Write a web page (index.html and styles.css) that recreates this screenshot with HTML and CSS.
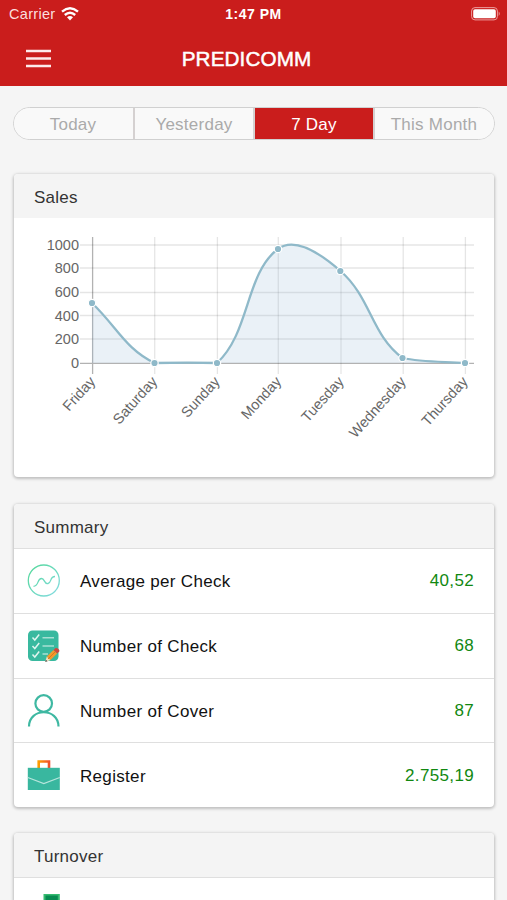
FILE: index.html
```html
<!DOCTYPE html>
<html lang="en">
<head>
<meta charset="utf-8">
<title>Predicomm</title>
<link rel="stylesheet" href="styles.css">
</head>
<body>
<header class="topbar">
  <div class="status">
    <div class="carrier"><span>Carrier</span>
      <svg width="18" height="14" viewBox="0 0 18 14" fill="none" stroke="#fff" stroke-width="2.4"><path d="M1 4.700Q9-2 17 4.700M3.800 8Q9 3.500 14.200 8"/><path d="M6 10.300Q9 7.600 12 10.300L9 13.500Z" fill="#fff" stroke="none"/></svg>
    </div>
    <span class="clock">1:47 PM</span>
    <svg class="battery" width="30" height="14" viewBox="0 0 30 14"><rect x=".6" y=".6" width="25.8" height="12.3" rx="3.4" fill="none" stroke="#ec9c9c" stroke-width="1"/><rect x="2.2" y="2.2" width="22.6" height="9.1" rx="1.8" fill="#fff"/><path d="M27.7 4.6Q29.8 6.8 27.7 9Z" fill="#ec9c9c"/></svg>
  </div>
  <div class="nav">
    <svg class="burger" width="25" height="19" viewBox="0 0 25 19" stroke="#fdeaea" stroke-width="2.4"><path d="M0 2H25M0 9.5H25M0 17H25"/></svg>
    <h1>PREDICOMM</h1>
    <span></span>
  </div>
</header>
<main>
  <div class="tabs">
    <div class="tab">Today</div>
    <div class="tab">Yesterday</div>
    <div class="tab active">7 Day</div>
    <div class="tab">This Month</div>
  </div>

  <section class="card sales">
    <h2>Sales</h2>
    <svg class="chart" width="480" height="259" viewBox="14 218 480 259">
      <g class="grid">
        <path d="M80 245H474M80 268H474M80 292.500H474M80 315.500H474M80 339H474"/>
        <path d="M154.700 237V374M217.400 237V374M278.300 237V374M341 237V374M403.200 237V374M465.400 237V374"/>
      </g>
      <path class="axis" d="M80 363.300H474M92.600 237V374"/>
      <path class="area" d="M92 363V303C117 327 125.500 349.100 154.500 363C175.500 363 200.900 363 217 363C250.300 332.300 245.300 273.300 278 249C294.700 236.500 321.400 254.300 340.500 271C371.200 297.900 371.100 334.800 402.500 358C420.900 363 440 361 465 363Z"/>
      <path class="line" d="M92 303C117 327 125.500 349.100 154.500 363C175.500 362.500 200.900 362.500 217 363C250.300 332.300 245.300 273.300 278 249C294.700 236.500 321.400 254.300 340.500 271C371.200 297.900 371.100 334.800 402.500 358C420.900 362 440 361.500 465 363"/>
      <g class="dots">
        <circle cx="92" cy="303" r="3.700"/><circle cx="154.500" cy="363" r="3.700"/><circle cx="217" cy="363" r="3.700"/><circle cx="278" cy="249" r="3.700"/><circle cx="340.300" cy="271" r="3.700"/><circle cx="402.500" cy="358" r="3.700"/><circle cx="465" cy="363" r="3.700"/>
      </g>
      <g class="ylabels">
        <text x="79" y="249.500">1000</text><text x="79" y="273">800</text><text x="79" y="297">600</text><text x="79" y="320.500">400</text><text x="79" y="343.500">200</text><text x="79" y="368">0</text>
      </g>
      <g class="xlabels">
        <text transform="translate(96 382) rotate(-48)">Friday</text>
        <text transform="translate(158 382) rotate(-48)">Saturday</text>
        <text transform="translate(220.500 382) rotate(-48)">Sunday</text>
        <text transform="translate(282 382) rotate(-48)">Monday</text>
        <text transform="translate(344.500 382) rotate(-48)">Tuesday</text>
        <text transform="translate(406.500 382) rotate(-48)">Wednesday</text>
        <text transform="translate(468.500 382) rotate(-48)">Thursday</text>
      </g>
    </svg>
  </section>

  <section class="card summary">
    <h2>Summary</h2>
    <div class="row">
      <svg width="34" height="34" viewBox="0 0 34 34" fill="none" stroke="url(#mint)" stroke-width="1.300"><defs><linearGradient id="mint" gradientUnits="userSpaceOnUse" x1="5" y1="4" x2="32" y2="30"><stop stop-color="#58d8a0"/><stop offset="1" stop-color="#83dbe0"/></linearGradient></defs><circle cx="16.800" cy="16.500" r="15.500"/><path d="M6.500 22.300C12 22.300 10 14.500 14.500 14.500C18 14.500 17 20.500 21 19.500C25 18.500 22.500 12.500 28 12.500"/></svg>
      <span class="name">Average per Check</span><span class="value">40,52</span>
    </div>
    <div class="row">
      <svg width="34" height="34" viewBox="0 0 34 34"><rect x="1" y="1.500" width="30.500" height="30.500" rx="4.500" fill="#39b99f"/><path d="M5.500 8.500L7.800 11L12.200 5.500M5.500 17L7.800 19.500L12.200 14M5.500 25.500L7.800 28L12.200 22.500" fill="none" stroke="#dff5ef" stroke-width="1.500"/><path d="M15.500 8.800H27M15.500 17H27M15.500 25H21" stroke="#a7dfd3" stroke-width="1.500"/><path d="M18.200 33L19.800 27.500L23.500 31Z" fill="#f4dfbd"/><path d="M18.200 33L18.900 30.800L20.600 32.200Z" fill="#555"/><path d="M19.800 27.500L26.500 21L30.200 24.500L23.500 31Z" fill="#f29a2e"/><path d="M26.500 21L28.600 19Q30 18.700 31.500 20.100Q32.800 21.500 32.300 22.500L30.200 24.500Z" fill="#cf473e"/><path d="M21 30L28.300 22.700" stroke="#d9781f"/></svg>
      <span class="name">Number of Check</span><span class="value">68</span>
    </div>
    <div class="row">
      <svg width="34" height="34" viewBox="0 0 34 34" fill="none" stroke="#3eb8a2" stroke-width="2.200"><circle cx="16.700" cy="9.500" r="8.300"/><path d="M2 32.500C2 13.500 31.500 13.500 31.500 32.500"/></svg>
      <span class="name">Number of Cover</span><span class="value">87</span>
    </div>
    <div class="row">
      <svg width="34" height="34" viewBox="0 0 34 34"><defs><linearGradient id="handle" gradientUnits="userSpaceOnUse" x1="11" y1="0" x2="23" y2="0"><stop stop-color="#ffa000"/><stop offset="1" stop-color="#ef4c2f"/></linearGradient></defs><path d="M11.700 9V2.500H22V9" fill="none" stroke="url(#handle)" stroke-width="2.600"/><rect x=".8" y="8.800" width="32" height="22.200" fill="#39b79f"/><path d="M.8 18.500L16.800 24.500L32.800 18.500" fill="none" stroke="#b7e5dc" stroke-width="1.200"/></svg>
      <span class="name">Register</span><span class="value">2.755,19</span>
    </div>
  </section>

  <section class="card turnover">
    <h2>Turnover</h2>
    <div class="row">
      <svg width="34" height="6" viewBox="0 0 34 6"><rect x="16.500" y="0" width="16.300" height="6" fill="#35bb70"/><rect x="18.500" y="1.500" width="12.300" height="4.500" fill="#088b51"/></svg>
    </div>
  </section>
</main>
</body>
</html>
```
FILE: styles.css
```css
* { box-sizing: border-box; }
body {
  margin: 0;
  height: 900px;
  overflow: hidden;
  background: #f5f5f5;
  font-family: "Liberation Sans", Arial, sans-serif;
  font-size: 17px;
  letter-spacing: .25px;
}
.topbar { height: 86px; background: #ca1d1c; color: #fff; }
.status {
  display: grid;
  grid-template-columns: 1fr auto 1fr;
  align-items: center;
  height: 27px;
  padding: 0 6px 0 9px;
  font-size: 14.500px;
}
.carrier { display: flex; align-items: center; gap: 6px; color: #fbdede; letter-spacing: .3px; }
.clock { margin-right: 3px; font-weight: bold; font-size: 14px; letter-spacing: .5px; }
.battery { justify-self: end; }
.nav {
  display: grid;
  grid-template-columns: 1fr auto 1fr;
  align-items: center;
  height: 63px;
  padding: 0 40px 0 26px;
}
.nav h1 { margin: 0; font-size: 20.700px; font-weight: normal; letter-spacing: .1px; -webkit-text-stroke: .5px #fff; }
main { padding: 21px 13px 0 14px; }
.tabs {
  display: grid;
  grid-template-columns: 120px 120px 120px 1fr;
  height: 33px;
  margin: 0 -1px;
  border: 1px solid #d0d0d0;
  border-radius: 17px;
  overflow: hidden;
}
.tab {
  display: flex;
  align-items: center;
  justify-content: center;
  color: #aaa;
  background: #f9f9f9;
  padding: 2px 2px 0 0;
}
.tab + .tab { border-left: 2px solid #d5d1d1; margin-left: -1px; padding-right: 1px; }
.tab.active { background: #ca1d1c; color: #fff; }
.card {
  background: #fff;
  border-radius: 4px;
  box-shadow: 0 1px 3px 1px rgba(0, 0, 0, .22);
  overflow: hidden;
}
.card h2 {
  margin: 0;
  height: 44px;
  padding: 2px 20px 0;
  line-height: 43px;
  background: #f4f4f4;
  color: #333;
  font-size: 17px;
  font-weight: normal;
}
.sales { height: 303px; margin-top: 34px; }
.summary { margin-top: 27px; }
.turnover { margin-top: 25.400px; height: 70px; }
.chart { display: block; letter-spacing: 0; }
.row {
  display: flex;
  align-items: center;
  height: 64.800px;
  padding: 1px 20px 0 13px;
  border-top: 1.500px solid #dfdfdf;
}
.turnover .row { height: 23px; padding-top: 0; align-items: flex-end; }
.name { margin: 2px auto 0 19px; color: #111; letter-spacing: .32px; }
.value { color: #118811; letter-spacing: .35px; }
.grid { stroke: #000; stroke-opacity: .1; stroke-width: 1.300; }
.axis { stroke: #000; stroke-opacity: .3; stroke-width: 1.300; fill: none; }
.area { fill: rgba(151, 187, 215, .2); }
.line { fill: none; stroke: #8fb9c9; stroke-width: 2.300; }
.dots { fill: #8fb9c9; stroke: #fff; stroke-width: 1.200; }
.ylabels, .xlabels { fill: #666; font-size: 14.500px; text-anchor: end; }
```
